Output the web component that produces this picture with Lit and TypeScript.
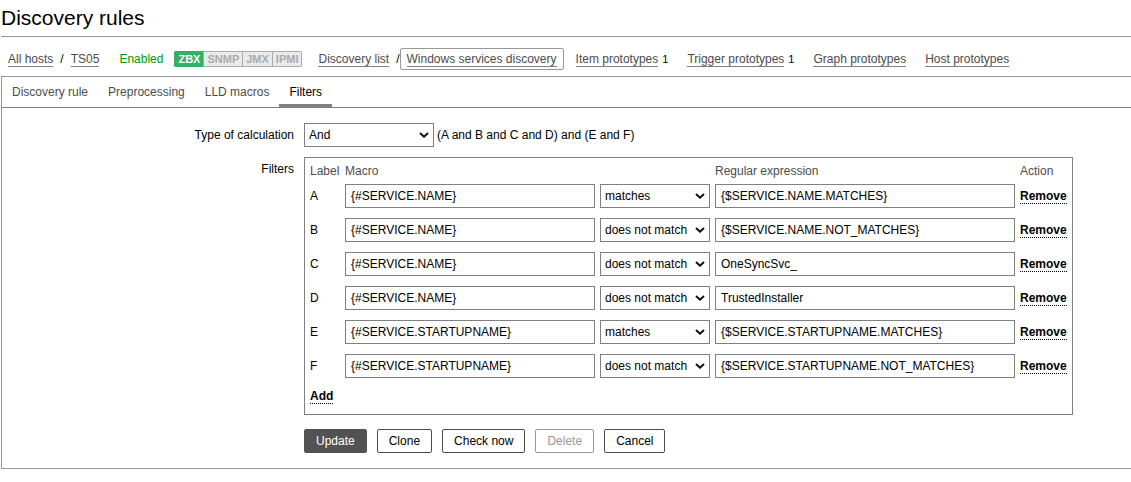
import { LitElement, html, css } from "lit";
import { customElement, property, state } from "lit/decorators.js";

interface FilterRow {
  label: string;
  macro: string;
  operator: string;
  regexp: string;
}

const OPERATORS = ["matches", "does not match"];

const selectStyles = css`
  .dropdown {
    box-sizing: border-box;
    height: 24px;
    margin: 0;
    padding: 0 16px 0 4px;
    border: 1px solid #808080;
    border-radius: 0;
    appearance: none;
    background: #ffffff
      url("data:image/svg+xml,%3Csvg xmlns='http://www.w3.org/2000/svg' width='10' height='6' viewBox='0 0 10 6'%3E%3Cpath d='M1 1l4 3.7L9 1' fill='none' stroke='%23111' stroke-width='2'/%3E%3C/svg%3E")
      no-repeat right 4px center;
    color: #000000;
    font: inherit;
  }
`;

@customElement("host-nav")
class HostNav extends LitElement {
  static styles = css`
    :host {
      display: block;
      border-top: 1px solid #979797;
    }
    .bar {
      display: flex;
      align-items: baseline;
      height: 39px;
      margin: 0 7px;
      padding-top: 11px;
      box-sizing: border-box;
      white-space: nowrap;
    }
    .link {
      color: #4c4c4c;
      text-decoration: none;
      border-bottom: 1px solid #808080;
      line-height: 14px;
    }
    .slash {
      padding: 0 7px;
    }
    .tight {
      padding-right: 0;
    }
    .enabled {
      color: #009900;
      margin: 0 11px 0 20px;
    }
    .badges {
      display: flex;
      border: 1px solid #aaaaaa;
      border-left: 0;
      border-radius: 2px;
      background: #ebebeb;
      color: #aaaaaa;
      font-size: 11px;
      font-weight: bold;
      line-height: 14px;
      margin-right: 16px;
    }
    .badge {
      padding: 0 3px;
      border-left: 1px solid #aaaaaa;
    }
    .on {
      margin: -1px 0;
      padding: 1px 3px 1px 4px;
      border-left: 0;
      border-radius: 2px 0 0 2px;
      background: #34af67;
      color: #ffffff;
    }
    .current {
      border: 1px solid #979797;
      border-radius: 2px;
      padding: 3px 6px;
    }
    .item {
      margin-left: 19px;
    }
    .first {
      margin-left: 12px;
    }
    .count {
      font-size: 11px;
      margin-left: 4px;
    }
  `;

  render() {
    return html`
      <nav class="bar">
        <a class="link" href="#hosts">All hosts</a>
        <span class="slash">/</span>
        <a class="link" href="#host">TS05</a>
        <span class="enabled">Enabled</span>
        <span class="badges"
          ><span class="badge on">ZBX</span><span class="badge">SNMP</span
          ><span class="badge">JMX</span><span class="badge">IPMI</span></span
        >
        <a class="link" href="#rules">Discovery list</a>
        <span class="slash tight">/</span>
        <span class="current"
          ><a class="link" href="#rule">Windows services discovery</a></span
        >
        <span class="item first"
          ><a class="link" href="#items">Item prototypes</a
          ><span class="count">1</span></span
        >
        <span class="item"
          ><a class="link" href="#triggers">Trigger prototypes</a
          ><span class="count">1</span></span
        >
        <span class="item"
          ><a class="link" href="#graphs">Graph prototypes</a></span
        >
        <span class="item"
          ><a class="link" href="#prototypes">Host prototypes</a></span
        >
      </nav>
    `;
  }
}

@customElement("filter-table")
class FilterTable extends LitElement {
  @property({ attribute: false }) rows: FilterRow[] = [];

  static styles = [
    selectStyles,
    css`
      :host {
        display: block;
        width: max-content;
        border: 1px solid #808080;
        padding: 5px 0 10px 5px;
      }
      .grid {
        border-collapse: collapse;
      }
      .head {
        padding: 1px 5px 1px 0;
        line-height: 14px;
        font-weight: normal;
        text-align: left;
        color: #4c4c4c;
      }
      .cell {
        padding: 5px 5px 5px 0;
        line-height: 14px;
      }
      .label {
        min-width: 30px;
      }
      .foot {
        padding: 6px 0 0;
      }
      .box {
        display: block;
        box-sizing: border-box;
        height: 24px;
        margin: 0;
        padding: 0 5px;
        border: 1px solid #808080;
        border-radius: 0;
        background: #ffffff;
        color: #000000;
        font: inherit;
      }
      .macro {
        width: 250px;
      }
      .operator {
        display: block;
        width: 110px;
      }
      .regexp {
        width: 300px;
      }
      .action {
        display: block;
        margin: 0;
        padding: 0;
        border: 0;
        border-bottom: 1px dotted #000000;
        background: none;
        color: #000000;
        font: inherit;
        font-weight: bold;
        line-height: 14px;
        cursor: pointer;
      }
    `,
  ];

  render() {
    return html`
      <table class="grid">
        <thead>
          <tr>
            <th class="head label">Label</th>
            <th class="head">Macro</th>
            <th class="head"></th>
            <th class="head">Regular expression</th>
            <th class="head">Action</th>
          </tr>
        </thead>
        <tbody>
          ${this.rows.map(
            (row) => html`
              <tr>
                <td class="cell">${row.label}</td>
                <td class="cell">
                  <input
                    class="box macro"
                    type="text"
                    aria-label="Macro ${row.label}"
                    .value=${row.macro}
                  />
                </td>
                <td class="cell">
                  <select class="dropdown operator" aria-label="Operator ${row.label}">
                    ${OPERATORS.map(
                      (name) => html`<option ?selected=${name === row.operator}>${name}</option>`
                    )}
                  </select>
                </td>
                <td class="cell">
                  <input
                    class="box regexp"
                    type="text"
                    aria-label="Regular expression ${row.label}"
                    .value=${row.regexp}
                  />
                </td>
                <td class="cell">
                  <button
                    class="action"
                    type="button"
                    @click=${() => this.emit("remove-filter", row.label)}
                  >Remove</button>
                </td>
              </tr>
            `
          )}
        </tbody>
        <tfoot>
          <tr>
            <td class="foot" colspan="5">
              <button
                class="action"
                type="button"
                @click=${() => this.emit("add-filter")}
              >Add</button>
            </td>
          </tr>
        </tfoot>
      </table>
    `;
  }

  private emit(name: string, detail?: string) {
    this.dispatchEvent(new CustomEvent(name, { detail }));
  }
}

@customElement("app-root")
class AppRoot extends LitElement {
  @state() private tab = "Filters";

  @state() private rows: FilterRow[] = [
    { label: "A", macro: "{#SERVICE.NAME}", operator: "matches", regexp: "{$SERVICE.NAME.MATCHES}" },
    { label: "B", macro: "{#SERVICE.NAME}", operator: "does not match", regexp: "{$SERVICE.NAME.NOT_MATCHES}" },
    { label: "C", macro: "{#SERVICE.NAME}", operator: "does not match", regexp: "OneSyncSvc_" },
    { label: "D", macro: "{#SERVICE.NAME}", operator: "does not match", regexp: "TrustedInstaller" },
    { label: "E", macro: "{#SERVICE.STARTUPNAME}", operator: "matches", regexp: "{$SERVICE.STARTUPNAME.MATCHES}" },
    { label: "F", macro: "{#SERVICE.STARTUPNAME}", operator: "does not match", regexp: "{$SERVICE.STARTUPNAME.NOT_MATCHES}" },
  ];

  static styles = [
    selectStyles,
    css`
      :host {
        display: block;
        padding-left: 1px;
        background: #ffffff;
        color: #000000;
        font: 12px/14px "Liberation Sans", Arial, sans-serif;
      }
      .title {
        margin: 0;
        padding: 6px 0;
        font-size: 21px;
        font-weight: normal;
        line-height: 24px;
      }
      .panel {
        border: 1px solid #979797;
        border-right: 0;
      }
      .tabs {
        display: flex;
        height: 30px;
        border-bottom: 1px solid #808080;
      }
      .tab {
        margin: 0;
        padding: 3px 10px 0;
        border: 0;
        border-bottom: 3px solid transparent;
        background: none;
        color: #4c4c4c;
        font: inherit;
        cursor: pointer;
      }
      .active {
        border-bottom-color: #808080;
        color: #000000;
      }
      .form {
        display: grid;
        grid-template-columns: 292px 1fr;
        column-gap: 10px;
        row-gap: 10px;
        padding: 15px 0;
      }
      .name {
        padding-top: 5px;
        text-align: right;
      }
      .calc {
        display: flex;
        align-items: center;
        gap: 3px;
      }
      .calculation {
        width: 130px;
      }
      .buttons {
        display: flex;
        grid-column: 2;
        gap: 10px;
        padding-top: 4px;
      }
      .button {
        height: 24px;
        margin: 0;
        padding: 0 11px;
        border: 1px solid #4c4c4c;
        border-radius: 2px;
        background: #ffffff;
        color: #000000;
        font: inherit;
        cursor: pointer;
      }
      .primary {
        border-color: #525252;
        background: #525252;
        color: #ffffff;
      }
      .button:disabled {
        border-color: #979797;
        color: #979797;
        cursor: default;
      }
    `,
  ];

  render() {
    return html`
      <h1 class="title">Discovery rules</h1>
      <host-nav></host-nav>
      <main class="panel">
        <div class="tabs" role="tablist">
          ${["Discovery rule", "Preprocessing", "LLD macros", "Filters"].map(
            (name) => html`
              <button
                class="tab ${name === this.tab ? "active" : ""}"
                type="button"
                role="tab"
                aria-selected=${name === this.tab}
                @click=${() => (this.tab = name)}
              >${name}</button>
            `
          )}
        </div>
        <form class="form" @submit=${(e: Event) => e.preventDefault()}>
          <label class="name" for="calculation">Type of calculation</label>
          <div class="calc">
            <select class="dropdown calculation" id="calculation">
              <option>And/Or</option>
              <option selected>And</option>
              <option>Or</option>
            </select>
            <span>(A and B and C and D) and (E and F)</span>
          </div>
          <span class="name">Filters</span>
          <filter-table
            .rows=${this.rows}
            @remove-filter=${this.removeRow}
            @add-filter=${this.addRow}
          ></filter-table>
          <div class="buttons">
            <button class="button primary" type="submit">Update</button>
            <button class="button" type="button">Clone</button>
            <button class="button" type="button">Check now</button>
            <button class="button" type="button" disabled>Delete</button>
            <button class="button" type="button">Cancel</button>
          </div>
        </form>
      </main>
    `;
  }

  private removeRow(e: CustomEvent<string>) {
    this.rows = this.rows.filter((row) => row.label !== e.detail);
  }

  private addRow() {
    const last = this.rows[this.rows.length - 1];
    const label = last ? String.fromCharCode(last.label.charCodeAt(0) + 1) : "A";
    this.rows = [...this.rows, { label, macro: "", operator: "matches", regexp: "" }];
  }
}
